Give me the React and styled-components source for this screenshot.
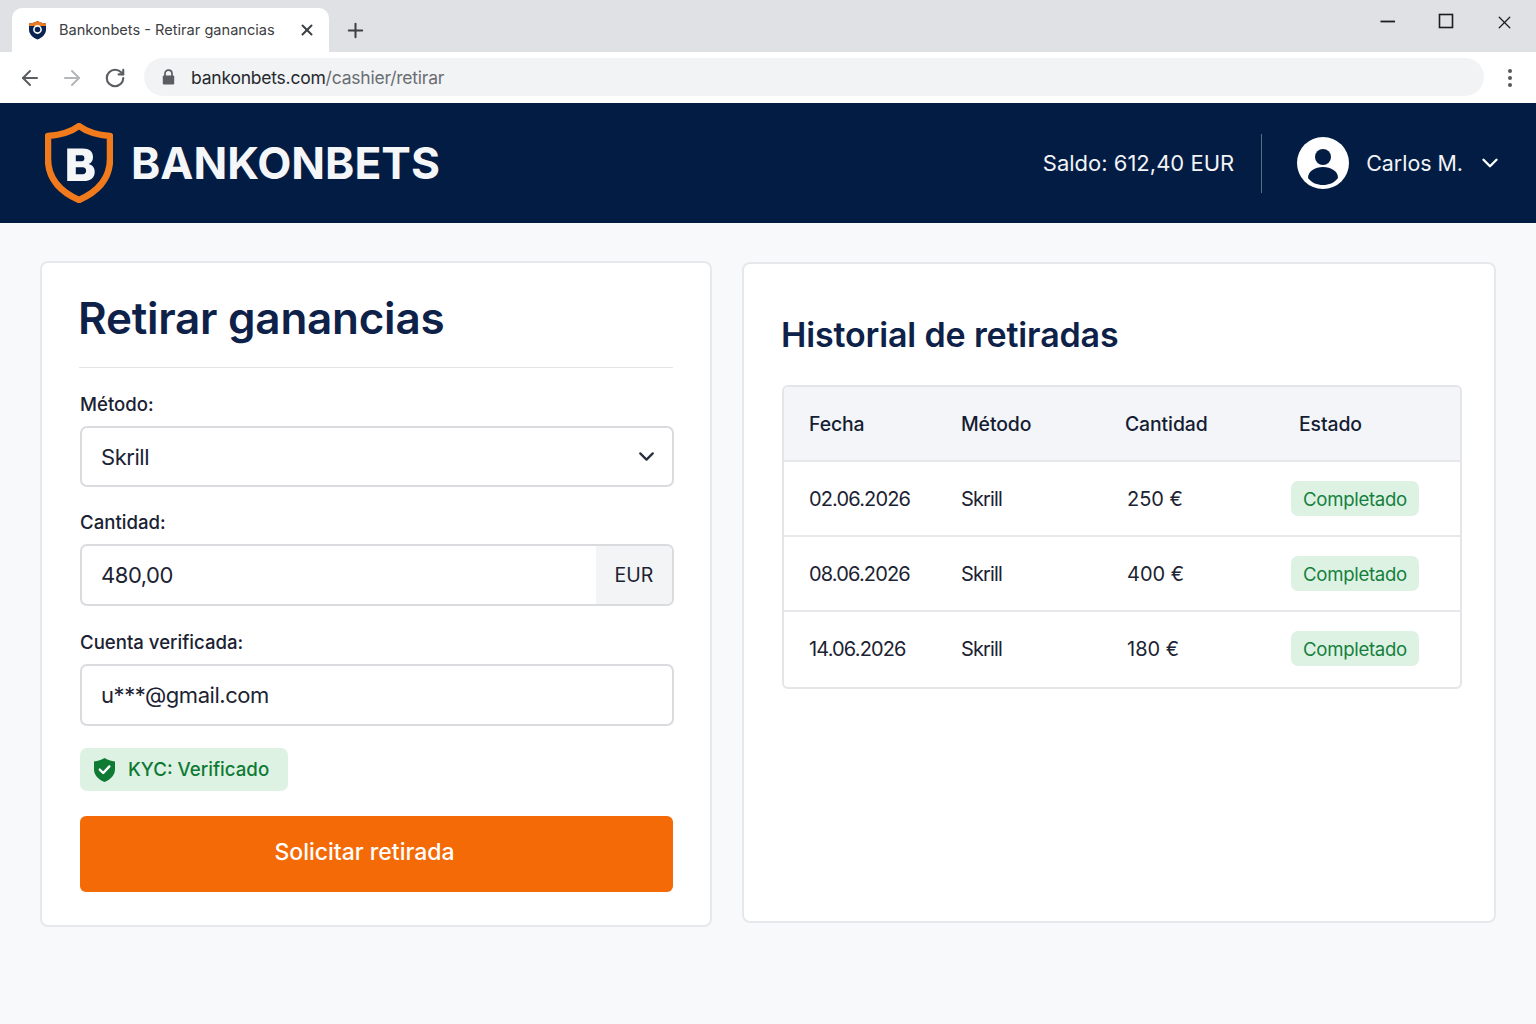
import React from "react";
import styled, { createGlobalStyle } from "styled-components";
import { ArrowLeft, ArrowRight, RotateCw, Plus, X, ChevronDown } from "lucide-react";

const Global = createGlobalStyle`
  html, body { margin: 0; padding: 0; background: #f8f9fb; }
  * { box-sizing: border-box; }
  body { font-family: Inter, "Liberation Sans", sans-serif; color: #111b30; }
`;

const Page = styled.div`
  width: 1536px;
  height: 1024px;
  overflow: hidden;
  display: flex;
  flex-direction: column;
`;

// browser chrome
const TabStrip = styled.div`
  height: 52px;
  background: #e0e1e5;
  display: flex;
  align-items: flex-end;
  padding-left: 12px;
`;
const Tab = styled.div`
  width: 317px;
  height: 44px;
  background: #fff;
  border-radius: 10px 10px 0 0;
  display: flex;
  align-items: center;
  padding: 0 13px 0 16px;
  font-size: 14.6px;
  color: #3d4043;
`;
const TabTitle = styled.span`
  margin-left: 12px;
  flex: 1;
  white-space: nowrap;
  overflow: hidden;
`;
const NewTab = styled.div`
  margin-left: 15px;
  height: 44px;
  display: flex;
  align-items: center;
  color: #3c3f43;
`;
const WindowControls = styled.div`
  margin-left: auto;
  height: 52px;
  width: 178px;
  display: flex;
  align-items: flex-start;
  padding: 12px 21px 0 21px;
  justify-content: space-between;
  color: #1c1c1e;
`;
const Toolbar = styled.div`
  height: 51px;
  background: #fff;
  display: flex;
  align-items: center;
  padding: 0 0 0 18px;
  color: #5a5d61;
`;
const NavIcons = styled.div`
  display: flex;
  align-items: center;
  gap: 18px;
  width: 126px;
`;
const ReloadIcon = styled(RotateCw)`
  margin-left: 2px;
`;
const AddressBar = styled.div`
  width: 1340px;
  height: 38px;
  margin-top: -1px;
  background: #f2f3f5;
  border-radius: 19px;
  display: flex;
  align-items: center;
  padding-left: 18px;
  gap: 16px;
  font-size: 17.5px;
  letter-spacing: -0.22px;
  color: #6a6d72;
`;
const Host = styled.span`
  color: #26292e;
`;
const Dots = styled.div`
  margin-left: 24px;
  display: flex;
  flex-direction: column;
  gap: 3px;
`;
const Dot = styled.i`
  width: 4px;
  height: 4px;
  border-radius: 50%;
  background: #55585c;
`;

// site header
const Header = styled.header`
  height: 120px;
  background: #031c44;
  display: flex;
  align-items: center;
  padding: 0 33px 0 45px;
  color: #fff;
`;
const Brand = styled.div`
  font-size: 44.3px;
  font-weight: 700;
  margin-left: 18px;
  color: #f5f6f8;
`;
const Balance = styled.div`
  margin-left: auto;
  font-size: 22px;
  color: #f2f4f7;
`;
const VLine = styled.div`
  width: 1px;
  height: 59px;
  background: #5b6d88;
  margin: 0 35px 0 27px;
`;
const UserName = styled.div`
  font-size: 21.4px;
  margin: 0 14px 0 17px;
  color: #f2f4f7;
`;

// content
const Main = styled.main`
  display: flex;
  align-items: flex-start;
  gap: 30px;
  padding: 38px 40px 0;
`;
const Card = styled.section`
  background: #fff;
  border: 2px solid #e6e8ec;
  border-radius: 8px;
`;
const FormCard = styled(Card)`
  width: 672px;
  height: 666px;
  padding: 0 37px 0 38px;
`;
const HistoryCard = styled(Card)`
  width: 754px;
  height: 661px;
  margin-top: 1px;
  padding: 0 32px 0 37px;
`;
const Title = styled.h1`
  margin: 0 0 0 -1px;
  height: 105px;
  padding-top: 27px;
  text-indent: -1px;
  font-size: 44px;
  line-height: 56px;
  font-weight: 600;
  letter-spacing: -0.25px;
  color: #0e2148;
  border-bottom: 1px solid #e2e4e8;
`;
const Label = styled.div`
  font-size: 18.6px;
  line-height: 24px;
  font-weight: 500;
  color: #1a2233;
  margin: ${(p) => p.$top}px 0 10px;
`;
const Field = styled.div`
  height: ${(p) => p.$h || 61}px;
  width: 594px;
  background: #fff;
  border: 2px solid #d9dbdf;
  border-radius: 7px;
  display: flex;
  align-items: center;
  padding-left: 19px;
  font-size: 22px;
  letter-spacing: -0.45px;
  color: #1c2333;
  overflow: hidden;
`;
const Caret = styled.span`
  margin-left: auto;
  margin-right: 13px;
  display: flex;
  color: #2a3040;
`;
const Suffix = styled.span`
  margin-left: auto;
  width: 76px;
  height: 100%;
  background: #f3f4f6;
  display: flex;
  align-items: center;
  justify-content: center;
  font-size: 19.5px;
  letter-spacing: 0;
  color: #1c2333;
`;
const KycBadge = styled.div`
  margin-top: 22px;
  width: 208px;
  height: 43px;
  background: #def2e4;
  border-radius: 7px;
  display: flex;
  align-items: center;
  gap: 12px;
  padding-left: 13px;
  font-size: 18.7px;
  font-weight: 500;
  color: #0f7a34;
`;
const SubmitButton = styled.button`
  display: block;
  margin-top: 25px;
  width: 593px;
  height: 76px;
  border: 0;
  border-radius: 6px;
  background: #f46a06;
  color: #fff;
  font-family: inherit;
  font-size: 23px;
  font-weight: 500;
  padding: 0 24px 4px 0;
`;
const HistoryTitle = styled.h2`
  margin: 0;
  padding-top: 47px;
  font-size: 34px;
  line-height: 48px;
  font-weight: 600;
  letter-spacing: -0.15px;
  color: #0e2148;
`;
const Table = styled.div`
  margin: 26px 0 0 1px;
  width: 680px;
  height: 304px;
  border: 2px solid #e3e5e9;
  border-radius: 6px;
  overflow: hidden;
`;
const Row = styled.div`
  display: grid;
  grid-template-columns: 152px 164px 174px 1fr;
  align-items: center;
  height: 75px;
  padding-left: 25px;
  font-size: 20px;
  letter-spacing: -0.85px;
  color: #1c2333;
  border-top: 2px solid #e6e8ec;
`;
const HeadRow = styled(Row)`
  height: 73px;
  background: #f4f5f8;
  border-top: 0;
  font-size: 19.4px;
  letter-spacing: -0.1px;
  font-weight: 500;
  color: #141d33;
`;
const Amount = styled.span`
  margin-left: 2px;
  letter-spacing: 0;
`;
const StatusPill = styled.span`
  justify-self: start;
  margin-left: -8px;
  width: 128px;
  height: 35px;
  border-radius: 7px;
  background: #def2e4;
  color: #15803d;
  font-size: 18.6px;
  letter-spacing: -0.3px;
  display: flex;
  align-items: center;
  justify-content: center;
`;

const Shield = () => (
  <svg width="68" height="80" viewBox="0 0 68 80">
    <path
      d="M34 3 C42 9 53 12 65 13 L65 36 C65 56 52 69 34 77 C16 69 3 56 3 36 L3 13 C15 12 26 9 34 3 Z"
      fill="#031c44"
      stroke="#f07a1c"
      strokeWidth="6.5"
      strokeLinejoin="round"
    />
    <path
      fillRule="evenodd"
      transform="translate(5 6.5) scale(0.86)"
      d="M20 22 H38 C46 22 50 26 50 32 C50 36 48 39 45 40 C49 41 52 44 52 49 C52 56 47 60 39 60 H20 Z M30 30 V37 H37 C39 37 40 35.5 40 33.5 C40 31.5 39 30 37 30 Z M30 44 V52 H38 C40.5 52 42 50.5 42 48 C42 45.5 40.5 44 38 44 Z"
      fill="#f5f6f8"
    />
  </svg>
);

const Favicon = () => (
  <svg width="19" height="20" viewBox="0 0 19 20">
    <path d="M9.5 1 C12 2.5 15 3.2 18 3.5 L18 9.5 C18 14 14.5 17.5 9.5 19.5 C4.5 17.5 1 14 1 9.5 L1 3.5 C4 3.2 7 2.5 9.5 1 Z" fill="#0b2350" />
    <path d="M9.5 1 C12 2.5 15 3.2 18 3.5 L18 6 H1 L1 3.5 C4 3.2 7 2.5 9.5 1 Z" fill="#ee7a22" />
    <circle cx="9.5" cy="9.5" r="3.6" fill="none" stroke="#fff" strokeWidth="1.6" />
  </svg>
);

const Padlock = () => (
  <svg width="13" height="16" viewBox="0 0 13 16">
    <path d="M3 7 V4.6 C3 2.6 4.5 1.2 6.5 1.2 C8.5 1.2 10 2.6 10 4.6 V7" fill="none" stroke="#5a5d61" strokeWidth="1.7" />
    <rect x="0.8" y="6.4" width="11.4" height="9" rx="1.2" fill="#5a5d61" />
  </svg>
);

const MinimizeIcon = () => (
  <svg width="18" height="18" viewBox="0 0 18 18">
    <path d="M1.5 9.5 H16" stroke="currentColor" strokeWidth="1.8" />
  </svg>
);

const MaximizeIcon = () => (
  <svg width="18" height="18" viewBox="0 0 18 18">
    <rect x="2.5" y="2.5" width="13" height="13" fill="none" stroke="currentColor" strokeWidth="1.6" />
  </svg>
);

const Avatar = () => (
  <svg width="52" height="52" viewBox="0 0 52 52">
    <circle cx="26" cy="26" r="26" fill="#fff" />
    <circle cx="26" cy="20" r="8" fill="#031c44" />
    <path d="M11 41 C11 34 18 30 26 30 C34 30 41 34 41 41 C37 46 32 48 26 48 C20 48 15 46 11 41 Z" fill="#031c44" />
  </svg>
);

const KycShield = () => (
  <svg width="23" height="26" viewBox="0 0 23 26">
    <path d="M11.5 1 C14.5 3 18 4 22 4.4 L22 12 C22 18 18 22.5 11.5 25 C5 22.5 1 18 1 12 L1 4.4 C5 4 8.5 3 11.5 1 Z" fill="#0f7a34" />
    <path d="M6.8 12.6 L10.2 16 L16.4 9.4" fill="none" stroke="#fff" strokeWidth="2.4" strokeLinecap="round" strokeLinejoin="round" />
  </svg>
);

const rows = [
  ["02.06.2026", "Skrill", "250 €"],
  ["08.06.2026", "Skrill", "400 €"],
  ["14.06.2026", "Skrill", "180 €"],
];

export default function App() {
  return (
    <Page>
      <Global />
      <TabStrip>
        <Tab>
          <Favicon />
          <TabTitle>Bankonbets - Retirar ganancias</TabTitle>
          <X size={18} strokeWidth={2.6} />
        </Tab>
        <NewTab>
          <Plus size={23} strokeWidth={2.1} />
        </NewTab>
        <WindowControls>
          <MinimizeIcon />
          <MaximizeIcon />
          <X size={21} strokeWidth={1.5} />
        </WindowControls>
      </TabStrip>
      <Toolbar>
        <NavIcons>
          <ArrowLeft size={24} strokeWidth={2} />
          <ArrowRight size={24} strokeWidth={2} color="#b4b6ba" />
          <ReloadIcon size={22} strokeWidth={2.3} />
        </NavIcons>
        <AddressBar>
          <Padlock />
          <span>
            <Host>bankonbets.com</Host>/cashier/retirar
          </span>
        </AddressBar>
        <Dots>
          <Dot />
          <Dot />
          <Dot />
        </Dots>
      </Toolbar>
      <Header>
        <Shield />
        <Brand>BANKONBETS</Brand>
        <Balance>Saldo: 612,40 EUR</Balance>
        <VLine />
        <Avatar />
        <UserName>Carlos M.</UserName>
        <ChevronDown size={26} strokeWidth={2.2} />
      </Header>
      <Main>
        <FormCard>
          <Title>Retirar ganancias</Title>
          <Label $top={24}>Método:</Label>
          <Field>
            Skrill
            <Caret>
              <ChevronDown size={25} strokeWidth={2.2} />
            </Caret>
          </Field>
          <Label $top={23}>Cantidad:</Label>
          <Field $h={62}>
            480,00
            <Suffix>EUR</Suffix>
          </Field>
          <Label $top={24}>Cuenta verificada:</Label>
          <Field $h={62}>u***@gmail.com</Field>
          <KycBadge>
            <KycShield />
            KYC: Verificado
          </KycBadge>
          <SubmitButton>Solicitar retirada</SubmitButton>
        </FormCard>
        <HistoryCard>
          <HistoryTitle>Historial de retiradas</HistoryTitle>
          <Table>
            <HeadRow>
              <span>Fecha</span>
              <span>Método</span>
              <span>Cantidad</span>
              <span>Estado</span>
            </HeadRow>
            {rows.map(([date, method, amount]) => (
              <Row key={date}>
                <span>{date}</span>
                <span>{method}</span>
                <Amount>{amount}</Amount>
                <StatusPill>Completado</StatusPill>
              </Row>
            ))}
          </Table>
        </HistoryCard>
      </Main>
    </Page>
  );
}
